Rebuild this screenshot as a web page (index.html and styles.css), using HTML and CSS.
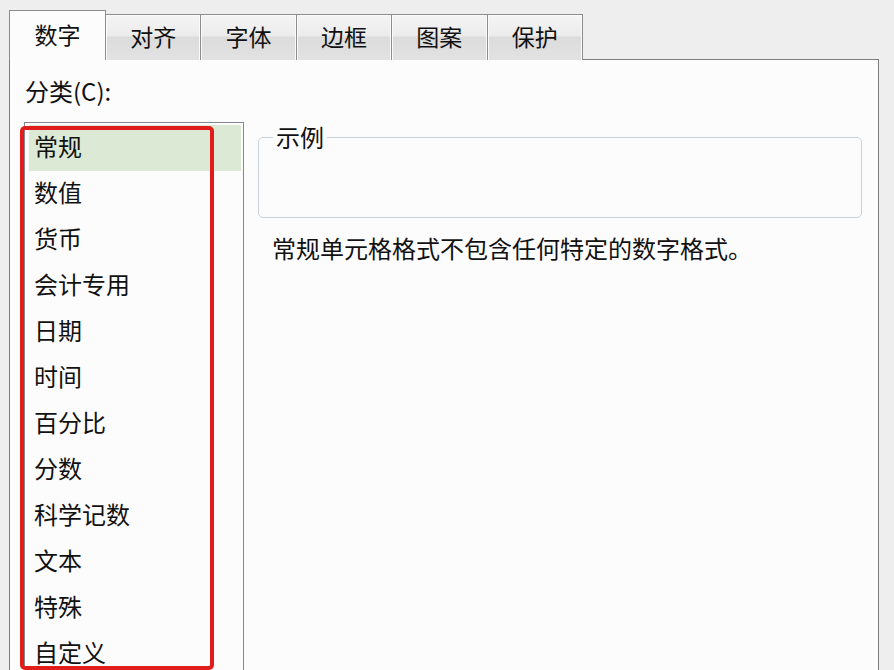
FILE: index.html
```html
<!DOCTYPE html>
<html lang="zh-CN">
<head>
	<meta charset="UTF-8">
	<meta name="viewport" content="width=device-width, initial-scale=1.0">
	<title>设置单元格格式</title>
	<link rel="stylesheet" href="styles.css">
</head>
<body>
	<div class="dialog">
		<ul class="tabs">
			<li class="tab active">数字</li>
			<li class="tab">对齐</li>
			<li class="tab">字体</li>
			<li class="tab">边框</li>
			<li class="tab">图案</li>
			<li class="tab">保护</li>
		</ul>

		<div class="panel">
			<div class="caption">分类(C):</div>
			<div class="body">
				<div class="category">
					<ul class="listbox">
						<li class="selected">常规</li>
						<li>数值</li>
						<li>货币</li>
						<li>会计专用</li>
						<li>日期</li>
						<li>时间</li>
						<li>百分比</li>
						<li>分数</li>
						<li>科学记数</li>
						<li>文本</li>
						<li>特殊</li>
						<li>自定义</li>
					</ul>
					<div class="mark"></div>
				</div>

				<div class="detail">
					<fieldset class="sample">
						<legend>示例</legend>
					</fieldset>
					<p class="desc">常规单元格格式不包含任何特定的数字格式。</p>
				</div>
			</div>
		</div>
	</div>
</body>
</html>
```

FILE: styles.css
```css
html, body {
	margin: 0;
	height: 100%;
	overflow: hidden;
}

body {
	background-color: #efeeef;
	color: #111;
	font-family: "Noto Sans CJK SC", "Noto Sans", sans-serif;
	font-size: 24px;
}

.dialog {
	padding: 10px 0 0 9px;
}

/* Tab strip */
.tabs {
	display: flex;
	align-items: flex-end;
	list-style: none;
	margin: 0 0 -1px 0;
	padding: 0;
	position: relative;
	z-index: 1;
}

.tab {
	box-sizing: border-box;
	width: 96.4px;
	height: 46px;
	margin-left: -1px;
	border: 1px solid #8c8c8c;
	border-bottom: none;
	box-shadow: inset 1px 1px 0 #fbfbfb, inset -1px 0 0 #fbfbfb;
	background: linear-gradient(#f4f4f4 0%, #ececec 45%, #dcdcdc 50%, #e2e2e2 100%);
	text-align: center;
	line-height: 42px;
	font-size: 23px;
}

.tab.active {
	width: 97px;
	height: 50px;
	margin-left: 0;
	background: #fdfcfd;
	box-shadow: none;
	line-height: 46px;
}

/* Page body */
.panel {
	box-sizing: border-box;
	width: 870px;
	height: 660px;
	border: 1px solid #7c7c7c;
	background-color: #fdfcfd;
	padding: 19px 16px 0 14px;
}

.caption {
	line-height: 24px;
	padding-left: 1px;
}

.body {
	display: flex;
	gap: 14px;
	margin-top: 19px;
}

.category {
	position: relative;
}

.listbox {
	box-sizing: border-box;
	width: 220px;
	height: 600px;
	margin: 0;
	padding: 2px 2px 0 4px;
	list-style: none;
	border: 1px solid #84878d;
	background-color: #fdfcfd;
}

.listbox li {
	height: 46px;
	line-height: 42px;
	padding-left: 5px;
}

.listbox li.selected {
	background-color: #dce9d5;
}

/* Red annotation frame drawn over the list */
.mark {
	position: absolute;
	left: -4px;
	top: 4px;
	width: 194px;
	height: 544px;
	box-sizing: border-box;
	border: 4px solid #e11d1b;
	border-radius: 5px;
}

.detail {
	flex: 1;
	padding-top: 3px;
}

.sample {
	box-sizing: border-box;
	height: 93px;
	margin: 0;
	padding: 0;
	border: 1px solid #c9d1d9;
	border-radius: 5px;
}

.sample legend {
	margin-left: 14px;
	padding: 0 3px;
	line-height: 24px;
}

.desc {
	margin: 18px 0 0 14px;
	line-height: 24px;
}
```
